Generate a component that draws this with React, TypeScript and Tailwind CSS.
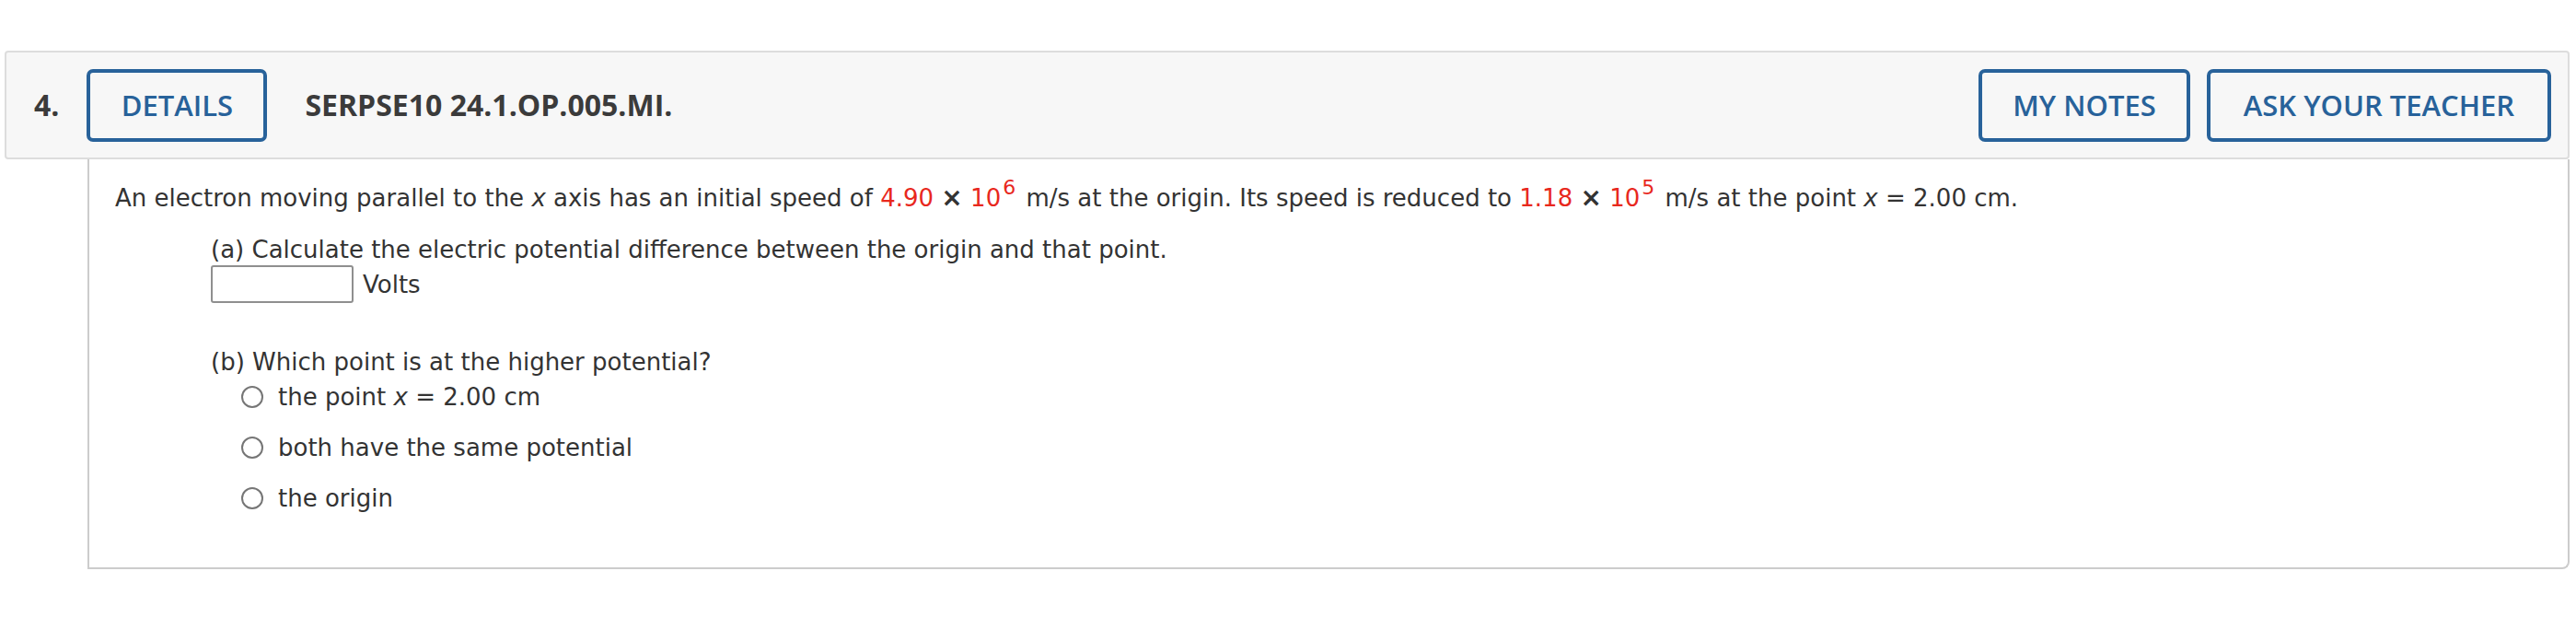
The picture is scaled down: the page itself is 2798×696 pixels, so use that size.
const Red = ({ children }: { children: React.ReactNode }) => (
  <span className="text-[#e8281d]">{children}</span>
);

const Sci = ({ base, exp }: { base: string; exp: string }) => (
  <>
    <Red>{base}</Red> <span className="text-[28px] font-bold">×</span>{' '}
    <Red>
      10<sup className="relative -top-[13px] ml-[2px] mr-[3px] text-[22px] leading-none">{exp}</sup>
    </Red>
  </>
);

const HeaderButton = ({ label, width }: { label: string; width: string }) => (
  <button
    className={`${width} flex h-[79px] items-center justify-center rounded-[7px] border-4 border-[#28629a] text-[31px] font-semibold text-[#28629a]`}
  >
    {label}
  </button>
);

const Radio = ({ children }: { children: React.ReactNode }) => (
  <label className="flex h-[34px] items-center">
    <span className="h-[24px] w-[24px] shrink-0 rounded-full border-2 border-[#767676] bg-white" />
    <span className="ml-[16px]">{children}</span>
  </label>
);

export default function App() {
  return (
    <div className="min-h-screen bg-white pl-[5px] pr-[7px] pt-[55px]">
      <div className="flex h-[118px] items-center rounded-[4px] border-2 border-[#dddddd] bg-[#f7f7f7] pl-[30px] pr-[18px] font-['Open_Sans',sans-serif]">
        <span className="text-[32px] font-bold text-[#3b3b3b]">4.</span>
        <div className="ml-[30px]">
          <HeaderButton label="DETAILS" width="w-[196px]" />
        </div>
        <span className="ml-[41px] text-[32px] font-bold text-[#3b3b3b]">SERPSE10 24.1.OP.005.MI.</span>
        <div className="ml-auto flex gap-[18px]">
          <HeaderButton label="MY NOTES" width="w-[230px]" />
          <HeaderButton label="ASK YOUR TEACHER" width="w-[374px]" />
        </div>
      </div>

      <div className="ml-[90px] rounded-br-[8px] border-x-2 border-b-2 border-[#cccccc] pb-[58px] pl-[28px] pt-[25px] font-['DejaVu_Sans',Verdana,sans-serif] text-[26px] leading-[34px] text-[#333333]">
        <p>
          An electron moving parallel to the <i>x</i> axis has an initial speed of <Sci base="4.90" exp="6" /> m/s at
          the origin. Its speed is reduced to <Sci base="1.18" exp="5" /> m/s at the point <i>x</i> = 2.00 cm.
        </p>

        <div className="ml-[104px] mt-[22px]">
          <p>(a) Calculate the electric potential difference between the origin and that point.</p>
          <div className="flex items-center">
            <input
              type="text"
              className="h-[41px] w-[155px] rounded-[3px] border-2 border-[#8f8f8f] bg-white"
            />
            <span className="ml-[10px]">Volts</span>
          </div>

          <p className="mt-[47px]">(b) Which point is at the higher potential?</p>
          <div className="ml-[33px] mt-[4px] flex flex-col gap-[21px]">
            <Radio>
              the point <i>x</i> = 2.00 cm
            </Radio>
            <Radio>both have the same potential</Radio>
            <Radio>the origin</Radio>
          </div>
        </div>
      </div>
    </div>
  );
}
